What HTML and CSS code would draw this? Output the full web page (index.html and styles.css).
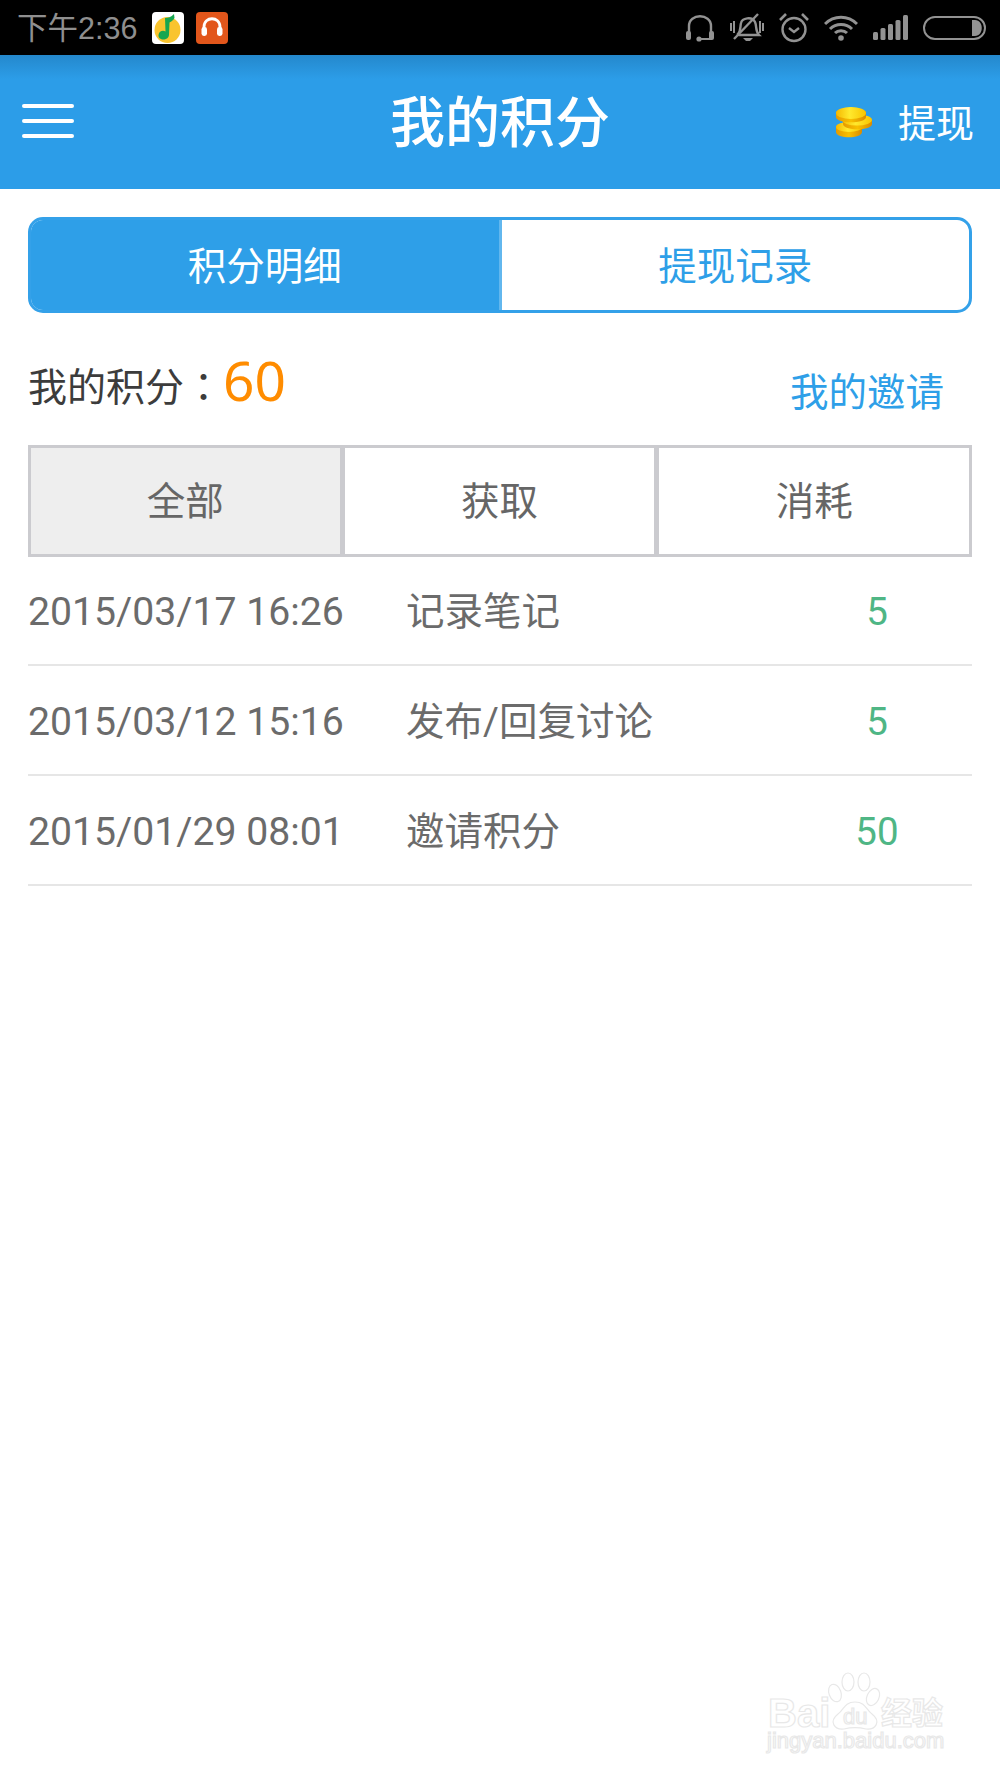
FILE: index.html
```html
<!DOCTYPE html>
<html lang="zh-CN">
<head>
    <meta charset="UTF-8">
    <meta name="viewport" content="width=device-width, initial-scale=1.0">
    <title>我的积分</title>
    <link rel="stylesheet" href="styles.css">
</head>
<body>
    <div class="status-bar">
        <div class="status-left">
            <span class="status-time">下午2:36</span>
            <svg class="app-icon" viewBox="0 0 32 32">
                <rect width="32" height="32" rx="4" fill="#fff"/>
                <circle cx="15.5" cy="18" r="13" fill="#f9c42e"/>
                <path d="M13 6 C16 6 19 5 22 2 L22.5 6 C21 9 18 10 17.5 10.5 L17 23 C16.5 29 6 29 6.5 23 C7 19 11 18 13.5 19.5 Z" fill="#17a650"/>
            </svg>
            <svg class="app-icon" viewBox="0 0 32 32">
                <rect width="32" height="32" rx="4" fill="#e2561b"/>
                <path d="M8 20 V15 C8 4 24 4 24 15 V20" fill="none" stroke="#fff" stroke-width="2.8"/>
                <rect x="5.5" y="15" width="5.5" height="9" rx="2.4" fill="#fff"/>
                <rect x="21" y="15" width="5.5" height="9" rx="2.4" fill="#fff"/>
            </svg>
        </div>
        <div class="status-right">
            <svg class="sys-icon" width="30" height="28" viewBox="0 0 30 28">
                <path d="M4 20 V12 C4 -1 26 -1 26 12 V20" fill="none" stroke="#929292" stroke-width="2.4"/>
                <rect x="1" y="17" width="5" height="9" rx="2" fill="#929292"/>
                <rect x="24" y="17" width="5" height="9" rx="2" fill="#929292"/>
                <path d="M14 25 H26" stroke="#929292" stroke-width="2"/>
                <circle cx="14" cy="25" r="2.6" fill="#929292"/>
            </svg>
            <svg class="sys-icon" width="34" height="30" viewBox="0 0 34 30">
                <path d="M8 21 C11 18 10 14 11 10 C12 5 22 3 25 9 C27 13 25 18 29 22 L9 22 Z" fill="none" stroke="#929292" stroke-width="2.4"/>
                <path d="M13 25 H23 L20 28 H16 Z" fill="#929292"/>
                <path d="M1 10 V18 M4 8 V20 M30 8 V20 M33 10 V18" stroke="#929292" stroke-width="2"/>
                <path d="M4 26 L28 1" stroke="#929292" stroke-width="2.4"/>
            </svg>
            <svg class="sys-icon" width="30" height="30" viewBox="0 0 30 30">
                <circle cx="15" cy="16.5" r="11.5" fill="none" stroke="#929292" stroke-width="2.4"/>
                <path d="M10 15 L15 19 L20 15" fill="none" stroke="#929292" stroke-width="2.4"/>
                <path d="M1 7 L7 1 M23 1 L29 7" stroke="#929292" stroke-width="2.6"/>
            </svg>
            <svg class="sys-icon" width="34" height="26" viewBox="0 0 34 26">
                <path d="M1 9 C10 0 24 0 33 9 M6 14 C12 8 22 8 28 14 M11 18 C14 15 20 15 23 18" fill="none" stroke="#929292" stroke-width="3"/>
                <circle cx="17" cy="23" r="2.8" fill="#929292"/>
            </svg>
            <svg class="sys-icon" width="35" height="25" viewBox="0 0 35 25">
                <rect x="0" y="17" width="5" height="8" rx="1.5" fill="#929292"/>
                <rect x="7.5" y="13" width="5" height="12" rx="1.5" fill="#929292"/>
                <rect x="15" y="9" width="5" height="16" rx="1.5" fill="#929292"/>
                <rect x="22.5" y="5" width="5" height="20" rx="1.5" fill="#929292"/>
                <rect x="30" y="0" width="5" height="25" rx="1.5" fill="#929292"/>
            </svg>
            <svg class="sys-icon" width="63" height="24" viewBox="0 0 63 24">
                <rect x="1" y="1" width="61" height="22" rx="11" fill="none" stroke="#929292" stroke-width="2"/>
                <path d="M49 4 H52 C61 4 61 20 52 20 H49 Z" fill="#929292"/>
            </svg>
        </div>
    </div>

    <header class="app-bar">
        <div class="menu-btn">
            <span></span>
            <span></span>
            <span></span>
        </div>
        <h1>我的积分</h1>
        <div class="withdraw">
            <svg class="coins" width="38" height="31" viewBox="0 0 38 31">
                <defs>
                    <linearGradient id="coinFace" x1="0" x2="1" y1="0" y2="0">
                        <stop offset="0" stop-color="#f5b800"/>
                        <stop offset="0.45" stop-color="#ffe92e"/>
                        <stop offset="1" stop-color="#f7c400"/>
                    </linearGradient>
                    <linearGradient id="coinEdge" x1="0" x2="1" y1="0" y2="0">
                        <stop offset="0" stop-color="#e59a00"/>
                        <stop offset="0.5" stop-color="#f8c000"/>
                        <stop offset="1" stop-color="#d98a00"/>
                    </linearGradient>
                </defs>
                <path d="M1 20 C1 14 27 14 27 20 V25 C27 32 1 32 1 25 Z" fill="url(#coinEdge)"/>
                <ellipse cx="14" cy="20" rx="13" ry="5" fill="url(#coinFace)"/>
                <path d="M8 13 C8 8 37 8 37 13 V17 C37 24 8 24 8 17 Z" fill="url(#coinEdge)"/>
                <ellipse cx="22" cy="13" rx="15" ry="5.5" fill="url(#coinFace)"/>
                <path d="M1 6 C1 -1 31 -1 31 6 V10 C31 17 1 17 1 10 Z" fill="url(#coinEdge)"/>
                <ellipse cx="16" cy="6" rx="15" ry="6" fill="url(#coinFace)"/>
            </svg>
            <span class="withdraw-text">提现</span>
        </div>
    </header>

    <main class="content">
        <div class="seg-tabs">
            <div class="seg-tab active">积分明细</div>
            <div class="seg-tab">提现记录</div>
        </div>

        <div class="summary">
            <div class="points">我的积分<span class="colon" lang="zh-TW">：</span><span class="points-num">60</span></div>
            <a class="invite">我的邀请</a>
        </div>

        <div class="filter">
            <div class="filter-item selected">全部</div>
            <div class="filter-item">获取</div>
            <div class="filter-item">消耗</div>
        </div>

        <div class="record">
            <span class="record-date">2015/03/17 16:26</span>
            <span class="record-name">记录笔记</span>
            <span class="record-num">5</span>
        </div>
        <div class="record">
            <span class="record-date">2015/03/12 15:16</span>
            <span class="record-name">发布/回复讨论</span>
            <span class="record-num">5</span>
        </div>
        <div class="record">
            <span class="record-date">2015/01/29 08:01</span>
            <span class="record-name">邀请积分</span>
            <span class="record-num">50</span>
        </div>
    </main>

    <svg class="watermark" width="200" height="100" viewBox="0 0 200 100">
        <g fill="#fff" stroke="#e8e8e8" stroke-width="1.2">
            <ellipse cx="75" cy="21" rx="6" ry="9" transform="rotate(-20 75 21)"/>
            <ellipse cx="88" cy="10" rx="6" ry="9"/>
            <ellipse cx="104" cy="10" rx="6" ry="9"/>
            <ellipse cx="113" cy="25" rx="6" ry="9" transform="rotate(25 113 25)"/>
            <path d="M95 30 C106 30 106 38 112 42 C122 50 115 58 106 57 C98 55 92 55 84 57 C75 58 68 50 78 42 C84 38 84 30 95 30 Z"/>
            <text class="wm-big" x="8" y="55">Bai</text>
            <text class="wm-du" x="83" y="52">du</text>
            <text class="wm-cn" x="121" y="52">经验</text>
            <text class="wm-url" x="7" y="76">jingyan.baidu.com</text>
        </g>
    </svg>
</body>
</html>
```

FILE: styles.css
```css
html, body {
    margin: 0;
    padding: 0;
}

body {
    position: relative;
    width: 1000px;
    height: 1778px;
    overflow: hidden;
    background-color: #fff;
    font-family: Roboto, "Noto Sans CJK SC", sans-serif;
}

.status-bar {
    display: flex;
    justify-content: space-between;
    align-items: center;
    height: 55px;
    padding: 0 14px 0 17px;
    background-color: #000;
    color: #8f8f8f;
}

.status-left {
    display: flex;
    align-items: center;
}

.status-time {
    font-family: "Liberation Sans", "Noto Sans CJK SC", sans-serif;
    font-size: 30.5px;
    width: 135px;
    margin-top: -4px;
}

.app-icon {
    width: 32px;
    height: 32px;
    margin-right: 12px;
}

.status-right {
    display: flex;
    align-items: center;
    gap: 15px;
}

.app-bar {
    display: flex;
    align-items: center;
    justify-content: space-between;
    position: relative;
    height: 134px;
    padding: 0 26px 0 22px;
    box-sizing: border-box;
    background: linear-gradient(#2488cc, #2c9de8 24px);
    color: #fff;
}

.app-bar h1 {
    position: absolute;
    left: 0;
    right: 0;
    top: 30px;
    margin: 0;
    text-align: center;
    font-size: 55px;
    font-weight: 500;
    line-height: 76px;
}

.menu-btn {
    display: flex;
    flex-direction: column;
    gap: 11px;
    width: 52px;
    margin-top: -2px;
}

.menu-btn span {
    height: 4px;
    background-color: #fff;
    border-radius: 2px;
}

.withdraw {
    display: flex;
    align-items: center;
    gap: 25px;
    font-size: 38px;
}

.withdraw-text {
    margin-top: -3px;
}

.coins {
    margin-top: 1px;
}

.content {
    padding: 28px 28px 0;
}

.seg-tabs {
    display: flex;
    height: 96px;
    box-sizing: border-box;
    border: 3px solid #34a1e9;
    border-radius: 15px;
    overflow: hidden;
    background-color: #fff;
}

.seg-tab {
    flex: 1;
    text-align: center;
    font-size: 38.5px;
    line-height: 94px;
    color: #2e9fe8;
}

.seg-tab.active {
    background-color: #2e9fe8;
    color: #fff;
    border-right: 3px solid #62b7ee;
}

.summary {
    display: flex;
    justify-content: space-between;
    align-items: center;
    height: 132px;
    padding-right: 28px;
}

.points {
    font-size: 39px;
    color: #3c3c3c;
}

.colon {
    font-family: "Noto Sans CJK TC", sans-serif;
}

.points-num {
    font-family: "Noto Sans", sans-serif;
    font-size: 55px;
    color: #ff8c00;
}

.invite {
    font-size: 38.5px;
    color: #2e9fe8;
    margin-top: 19px;
}

.filter {
    display: grid;
    grid-template-columns: repeat(3, 1fr);
    height: 110px;
    margin-bottom: 1px;
}

.filter-item {
    border: 3px solid #cbcbcf;
    padding-top: 2px;
    text-align: center;
    font-size: 38.5px;
    line-height: 104px;
    color: #666;
}

.filter-item + .filter-item {
    border-left-width: 2px;
}

.filter-item.selected {
    background-color: #eee;
}

.record {
    display: grid;
    grid-template-columns: 378px 1fr 190px;
    align-items: baseline;
    height: 110px;
    padding-top: 28px;
    box-sizing: border-box;
    border-bottom: 2px solid #e6e6e6;
    font-size: 38.5px;
    line-height: 56px;
    color: #6b6b6b;
}

.record-num {
    text-align: center;
    color: #4fb685;
}

.record-date {
    font-size: 39.2px;
}

.watermark {
    position: absolute;
    left: 760px;
    top: 1672px;
}

.wm-big {
    font-family: "Liberation Sans", sans-serif;
    font-size: 40px;
    font-weight: 700;
}

.wm-du {
    font-family: "Liberation Sans", sans-serif;
    font-size: 22px;
}

.wm-cn {
    font-family: "Noto Sans CJK SC", sans-serif;
    font-size: 31px;
    font-weight: 700;
}

.wm-url {
    font-family: "Liberation Sans", sans-serif;
    font-size: 22px;
}
```
